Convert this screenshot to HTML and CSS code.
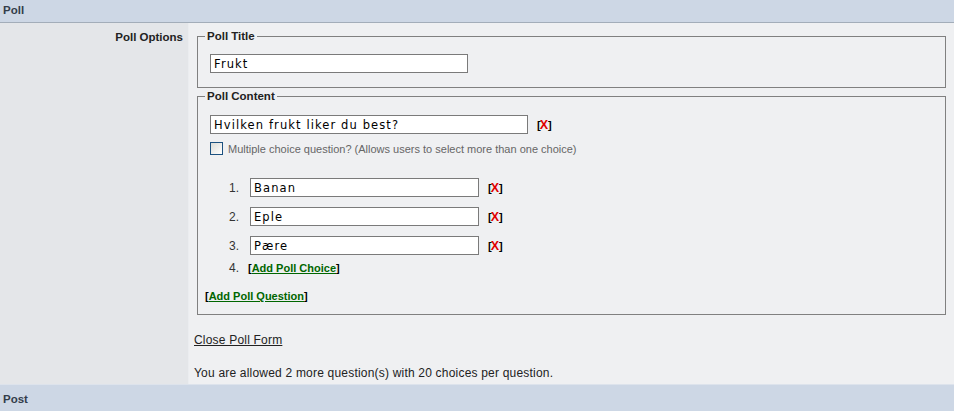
FILE: index.html
```html
<!DOCTYPE html>
<html lang="en">
<head>
    <meta charset="UTF-8">
    <title>Poll</title>
    <link rel="stylesheet" href="styles.css">
</head>
<body>
    <div class="cat">Poll</div>
    <div class="row">
        <div class="label">Poll Options</div>
        <div class="field">
            <fieldset class="box title-box">
                <legend>Poll Title</legend>
                <input type="text" class="txt title" value="Frukt">
            </fieldset>

            <fieldset class="box content-box">
                <legend>Poll Content</legend>
                <div class="question">
                    <input type="text" class="txt q" value="Hvilken frukt liker du best?">
                    <a href="#" class="del">[<span>X</span>]</a>
                </div>
                <label class="multi"><input type="checkbox" class="chk"> Multiple choice question? (Allows users to select more than one choice)</label>

                <div class="choices">
                    <div class="choice">
                        <span class="num">1.</span>
                        <input type="text" class="txt opt" value="Banan">
                        <a href="#" class="del">[<span>X</span>]</a>
                    </div>
                    <div class="choice">
                        <span class="num">2.</span>
                        <input type="text" class="txt opt" value="Eple">
                        <a href="#" class="del">[<span>X</span>]</a>
                    </div>
                    <div class="choice">
                        <span class="num">3.</span>
                        <input type="text" class="txt opt" value="Pære">
                        <a href="#" class="del">[<span>X</span>]</a>
                    </div>
                    <div class="choice add">
                        <span class="num">4.</span>
                        <span class="addlink">[<a href="#">Add Poll Choice</a>]</span>
                    </div>
                </div>

                <div class="addq"><span class="addlink">[<a href="#">Add Poll Question</a>]</span></div>
            </fieldset>

            <div class="close"><a href="#">Close Poll Form</a></div>
            <div class="allowed">You are allowed 2 more question(s) with 20 choices per question.</div>
        </div>
    </div>
    <div class="cat post">Post</div>
</body>
</html>
```

FILE: styles.css
```css
body {
    margin: 0;
    font-family: "Liberation Sans", Arial, sans-serif;
    font-size: 12px;
    color: #222;
    background: #eff0f2;
    width: 954px;
}
.cat {
    height: 22px;
    line-height: 21px;
    padding-left: 3px;
    background: #cdd7e5;
    border-bottom: 1px solid #a3adb9;
    font-weight: bold;
    font-size: 11.5px;
    color: #333d4b;
}
.cat.post {
    height: 26px;
    line-height: 28px;
    border-top: 1px solid #dde3ec;
    border-bottom: none;
}
.row {
    display: flex;
    height: 361px;
}
.label {
    width: 183px;
    padding: 7px 5px 0 0;
    background: #e4e6e9;
    border-right: 1px solid #ebedf0;
    text-align: right;
    font-weight: bold;
    font-size: 11.5px;
    color: #222;
    line-height: 14px;
}
.field {
    flex: 1;
    padding: 6px 5px 0 5px;
    background: #eff0f2;
}
.box {
    margin: 0 3px;
    padding: 11px 7px 14px 7px;
    border: 1px solid #808080;
    min-width: 0;
}
.box legend {
    padding: 0 2px;
    font-weight: bold;
    font-size: 11.5px;
    line-height: 14px;
    color: #222;
}
.content-box {
    margin-top: 1px;
    padding-bottom: 11px;
}
.txt {
    box-sizing: border-box;
    height: 19px;
    margin: 0;
    padding: 0 3px;
    border: 1px solid #7a7a7a;
    background: #fff;
    font-family: "DejaVu Sans", Verdana, sans-serif;
    font-size: 11.5px;
    letter-spacing: 1.1px;
    color: #000;
}
.title {
    width: 258px;
    margin-left: 5px;
}
.question {
    display: flex;
    align-items: center;
    margin-top: 1px;
    height: 19px;
}
.q {
    width: 318px;
    margin-left: 5px;
}
.del {
    margin-left: 9px;
    font-weight: bold;
    font-size: 11px;
    color: #000;
    text-decoration: none;
    letter-spacing: -1px;
    line-height: 12px;
}
.del span {
    color: #e00000;
    font-size: 12.5px;
    letter-spacing: 0;
}
.multi {
    display: flex;
    align-items: center;
    margin: 7px 0 0 5px;
    height: 15px;
    font-size: 11px;
    color: #666;
}
.chk {
    appearance: none;
    -webkit-appearance: none;
    width: 13px;
    height: 13px;
    margin: 0 5px 0 0;
    border: 1px solid #1c5180;
    background: linear-gradient(135deg, #dcdcd7, #fff);
}
.choices {
    margin-top: 22px;
    padding-left: 24px;
}
.choice {
    display: flex;
    align-items: center;
    height: 19px;
    margin-bottom: 10px;
}
.choice.add {
    height: 14px;
    margin-top: -4px;
    margin-bottom: 0;
}
.num {
    width: 21px;
    color: #333;
}
.opt {
    width: 229px;
}
.addlink {
    font-weight: bold;
    font-size: 11px;
    color: #000;
}
.addlink a {
    color: #006600;
}
.choice.add .addlink {
    margin-left: -2px;
}
.addq {
    margin-top: 14px;
    line-height: 14px;
}
.close {
    margin-top: 18px;
    line-height: 14px;
    letter-spacing: 0.2px;
}
.close a {
    color: #222;
}
.allowed {
    margin-top: 19px;
    line-height: 14px;
    letter-spacing: 0.2px;
    color: #222;
}
```
